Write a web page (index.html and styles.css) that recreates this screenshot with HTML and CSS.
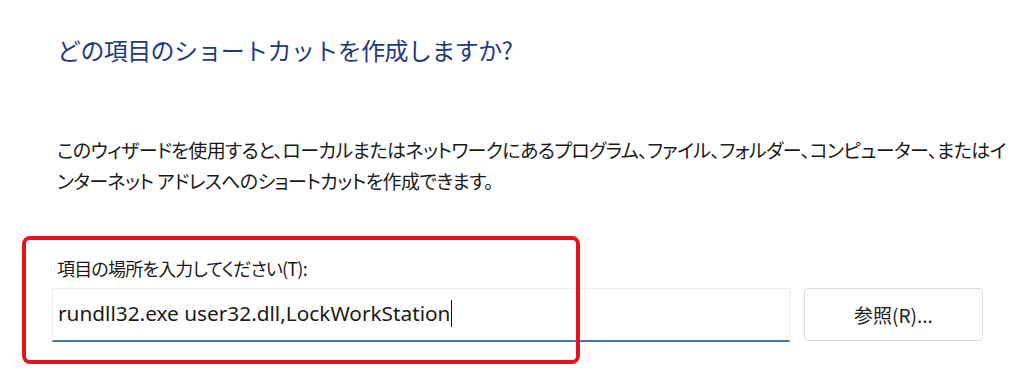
FILE: index.html
```html
<!DOCTYPE html>
<html lang="ja">
<head>
    <meta charset="UTF-8">
    <meta name="viewport" content="width=device-width, initial-scale=1.0">
    <title>ショートカットの作成</title>
    <link rel="stylesheet" href="styles.css">
</head>
<body>
    <div class="wizard">
        <h1 class="title">どの項目のショートカットを作成しますか?</h1>
        <p class="intro">このウィザードを使用すると、ローカルまたはネットワークにあるプログラム、ファイル、フォルダー、コンピューター、またはインターネット アドレスへのショートカットを作成できます。</p>

        <div class="field">
            <label class="field-label" for="location">項目の場所を入力してください(T):</label>
            <div class="field-row">
                <div class="text-box" id="location">rundll32.exe user32.dll,LockWorkStation<span class="caret"></span></div>
                <button class="browse">参照(R)...</button>
            </div>
            <div class="highlight"></div>
        </div>
    </div>
</body>
</html>
```

FILE: styles.css
```css
body {
    margin: 0;
    background-color: #fff;
    font-family: "Noto Sans", "Noto Sans CJK JP", sans-serif;
    color: #1a1a1a;
}
.wizard {
    min-height: 379px;
    box-sizing: border-box;
    padding: 34px 0 0 57px;
}
.title {
    margin: 0;
    font-family: "Noto Sans CJK JP", sans-serif;
    font-size: 24px;
    font-weight: normal;
    line-height: 32px;
    letter-spacing: -0.6px;
    color: #1f3c7c;
}
.intro {
    margin: 68px 0 0 0;
    width: 950px;
    font-family: "Noto Sans CJK JP", sans-serif;
    font-size: 19px;
    line-height: 31px;
    letter-spacing: -0.6px;
    font-feature-settings: "palt";
}
.field {
    position: relative;
    margin-top: 59px;
}
.field-label {
    display: block;
    font-family: "Noto Sans CJK JP", sans-serif;
    font-size: 18px;
    line-height: 26px;
    letter-spacing: -0.8px;
    font-feature-settings: "palt";
}
.field-row {
    display: flex;
    gap: 14px;
    margin-top: 7px;
    margin-left: -5px;
}
.text-box {
    width: 738px;
    height: 54px;
    box-sizing: border-box;
    border: 1px solid #ececec;
    border-bottom: 2px solid #4379ad;
    padding: 9px 0 0 5px;
    font-size: 20.8px;
    line-height: 30px;
    color: #1a1a1a;
}
.caret {
    display: inline-block;
    width: 1px;
    height: 27px;
    margin-left: 1px;
    vertical-align: -6px;
    background-color: #111;
}
.browse {
    width: 179px;
    height: 53px;
    background-color: #fff;
    border: 1px solid #dcdcdc;
    border-radius: 4px;
    font-family: "Noto Sans CJK JP", sans-serif;
    font-size: 19px;
    color: #222;
}
.highlight {
    position: absolute;
    left: -35px;
    top: -19px;
    width: 558px;
    height: 128px;
    box-sizing: border-box;
    border: 4px solid #e3141c;
    border-radius: 8px;
}
```
